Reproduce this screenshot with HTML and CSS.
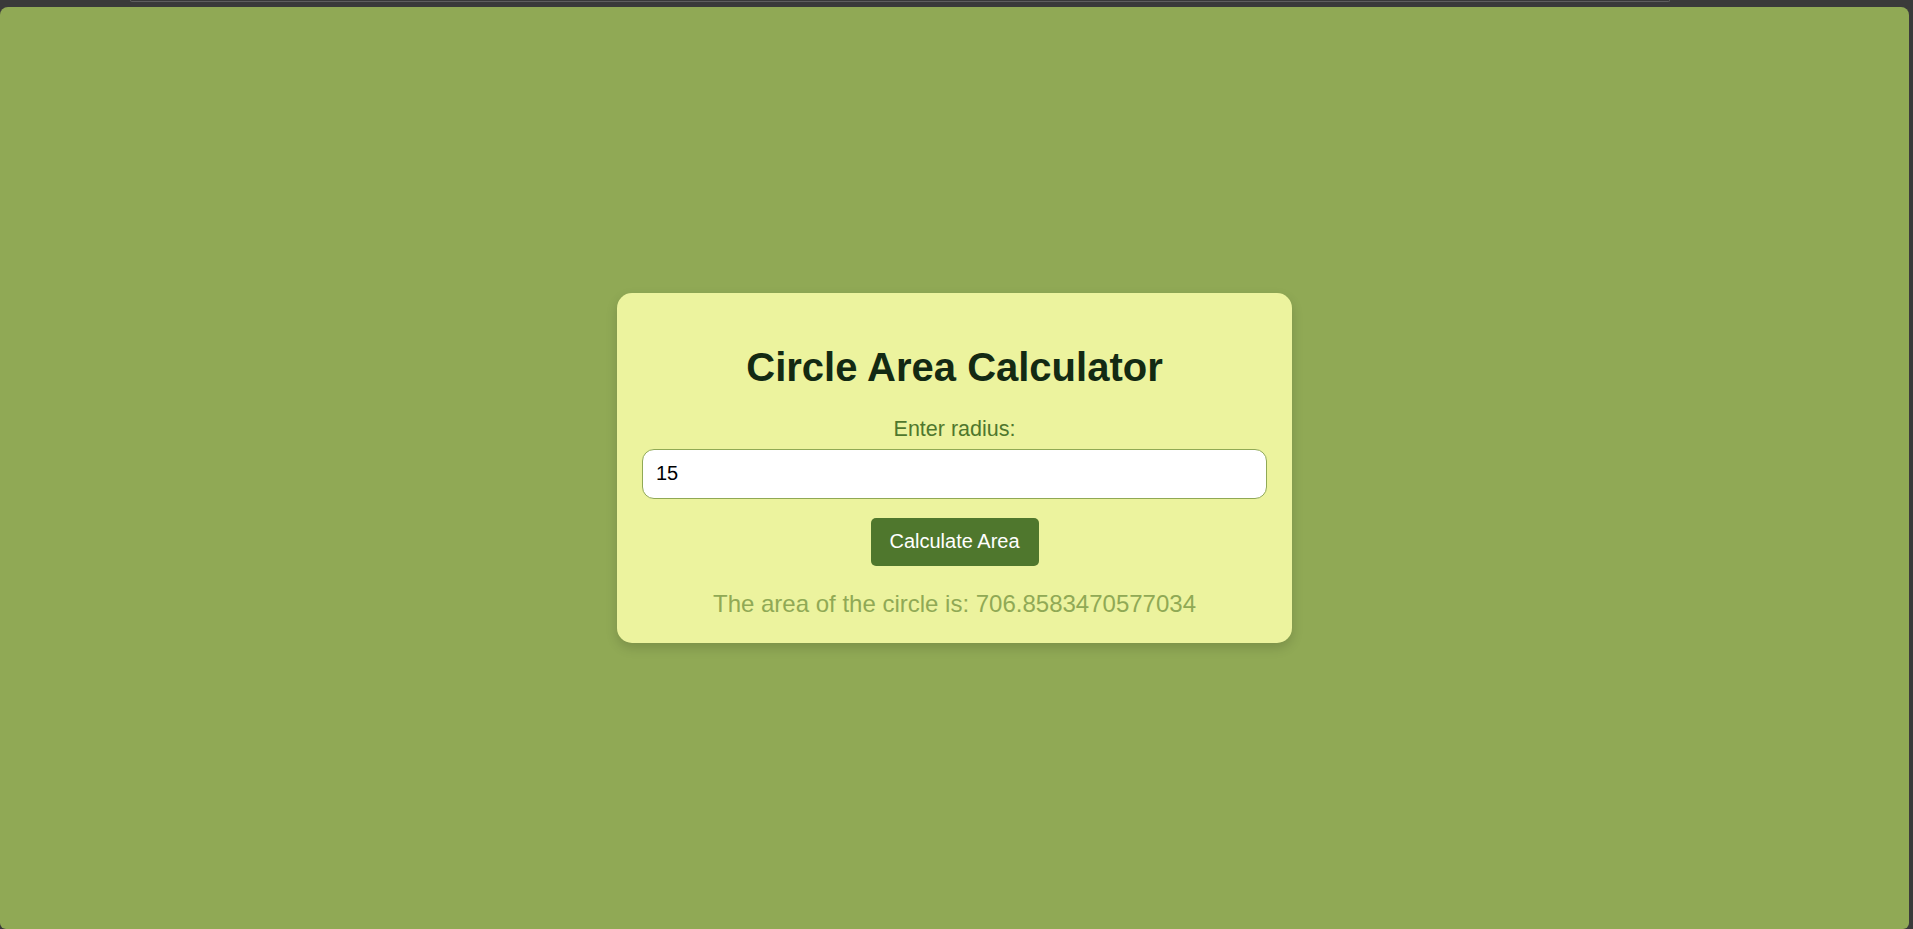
FILE: index.html
```html
<!DOCTYPE html>
<html lang="en">
<head>
<meta charset="utf-8">
<title>Circle Area Calculator</title>
<link rel="stylesheet" href="styles.css">
</head>
<body>
<div class="chrome-top"><div class="omnibox-edge"></div></div>
<div class="viewport">
  <div class="card">
    <h1 class="title">Circle Area Calculator</h1>
    <label class="label" for="radius">Enter radius:</label>
    <input class="input" id="radius" type="number" value="15">
    <button class="btn" type="button">Calculate Area</button>
    <p class="result">The area of the circle is: 706.8583470577034</p>
  </div>
</div>
</body>
</html>
```
FILE: styles.css
```css
html, body {
  margin: 0;
  padding: 0;
  height: 100%;
}
body {
  background: #3a3a3a;
  font-family: "Liberation Sans", Arial, sans-serif;
  display: flex;
  flex-direction: column;
  overflow: hidden;
}
.chrome-top {
  height: 7px;
  flex: none;
  display: flex;
}
.omnibox-edge {
  margin-left: 130px;
  width: 1538px;
  height: 1px;
  border: 1px solid #5e5e5e;
  border-top: none;
  border-radius: 0 0 6px 6px;
  background: #3a3a3a;
}
.viewport {
  flex: 1;
  margin-right: 4px;
  background: #90a955;
  border-radius: 8px 8px 6px 6px;
  display: flex;
  align-items: center;
  justify-content: center;
}
.card {
  width: 675px;
  box-sizing: border-box;
  padding: 25px 25px 26px;
  background: #ecf39e;
  border-radius: 15px;
  box-shadow: 0 5px 12px rgba(0, 0, 0, 0.15);
  display: flex;
  flex-direction: column;
  align-items: center;
}
.title {
  margin: 26.5px 0 27px;
  font-size: 40px;
  font-weight: bold;
  line-height: 45px;
  color: #132a13;
}
.label {
  font-size: 21.5px;
  line-height: 24px;
  color: #4f772d;
  margin-bottom: 8px;
}
.input {
  width: 100%;
  box-sizing: border-box;
  height: 50px;
  padding: 0 13px;
  border: 1px solid #90a955;
  border-radius: 12px;
  background: #ffffff;
  font-family: "Liberation Sans", Arial, sans-serif;
  font-size: 20px;
  color: #000;
  margin: 0 0 19px;
  outline: none;
  -moz-appearance: textfield;
}
.input::-webkit-outer-spin-button,
.input::-webkit-inner-spin-button {
  -webkit-appearance: none;
  margin: 0;
}
.btn {
  width: 168px;
  height: 48px;
  padding: 0;
  border: none;
  border-radius: 5px;
  background: #4f772d;
  color: #ffffff;
  font-family: "Liberation Sans", Arial, sans-serif;
  font-size: 20px;
}
.result {
  margin: 24px 0 0;
  font-size: 24px;
  line-height: 27px;
  color: #90a955;
}
```
